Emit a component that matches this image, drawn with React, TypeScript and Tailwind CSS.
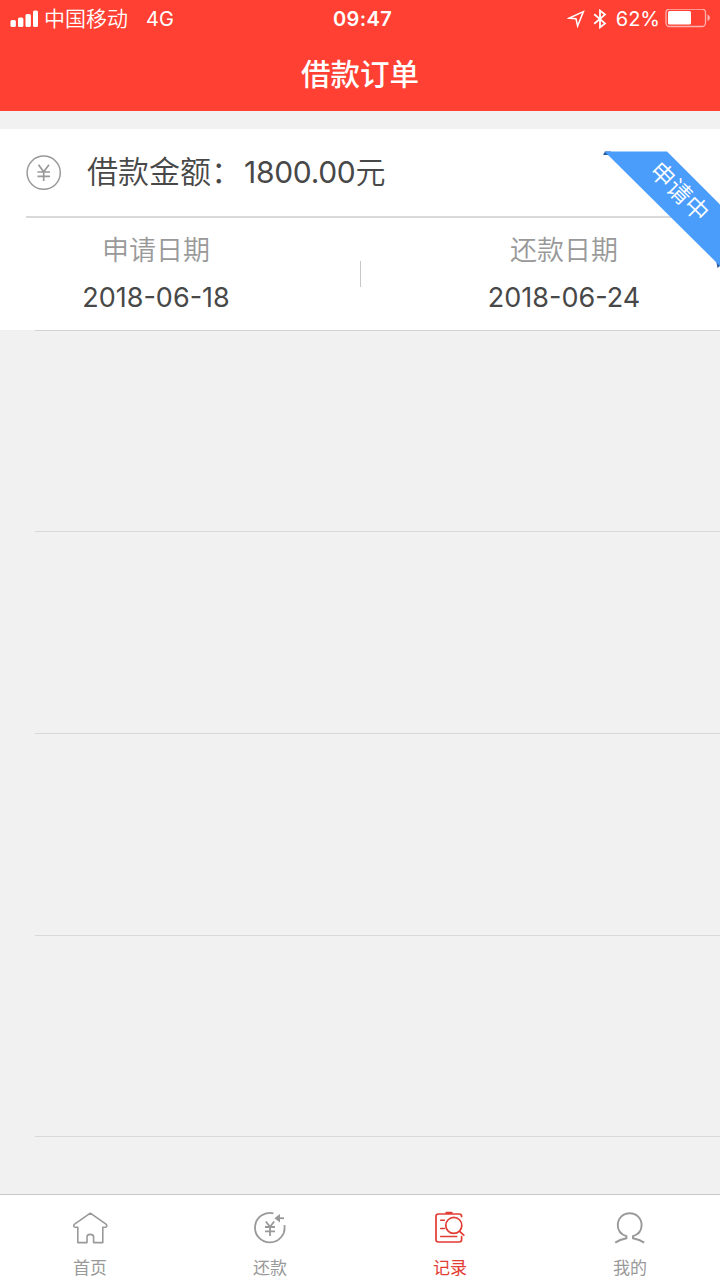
import type { ReactNode } from "react";
import clsx from "clsx";

const tabs = [
  { key: "home", label: "首页", icon: <HomeIcon /> },
  { key: "repay", label: "还款", icon: <RepayIcon /> },
  { key: "record", label: "记录", icon: <RecordIcon /> },
  { key: "mine", label: "我的", icon: <MineIcon /> },
];

const orders = [
  { id: 1, amount: "1800.00", applyDate: "2018-06-18", repayDate: "2018-06-24", status: "申请中" },
];

function HomeIcon() {
  return (
    <svg className="h-9 w-9" viewBox="0 0 36 36" fill="none" stroke="currentColor" strokeWidth="1.6" strokeLinejoin="round" strokeLinecap="round">
      <path d="M18.3 3.2 2.6 14.2Q1.4 15.2 2 16.6Q2.6 17.6 4.2 17.2H5.8V32.6H15V26.8Q15.2 24.4 18.3 24.4T21.6 26.8V32.6H30.8V17.2H32.4Q34 17.6 34.6 16.6Q35.2 15.2 34 14.2Z" />
    </svg>
  );
}

function RepayIcon() {
  return (
    <svg className="h-9 w-9" viewBox="0 0 36 36" fill="none" stroke="currentColor" strokeWidth="1.8">
      <path d="M21.4 3.3A14.8 14.8 0 1 0 32.4 15.2" />
      <path d="M32 8.2H24" />
      <path d="M28 4 22.4 8.2 28 12.4" fill="currentColor" stroke="none" />
      <path d="M13.8 11.5 18 16.8 22.2 11.5M18 16.8V26M13 17H23M13 21.4H23" />
    </svg>
  );
}

function RecordIcon() {
  return (
    <svg className="h-9 w-9" viewBox="0 0 36 36" fill="none" stroke="currentColor" strokeWidth="1.7" strokeLinecap="round">
      <path d="M29.6 6.6V6.4Q29.6 4 27.2 4H6.4Q4 4 4 6.4V29.6Q4 32 6.4 32H27.2Q29.6 32 29.6 29.6V26.6" />
      <path d="M14.4 2.8H19.6" strokeWidth="2.2" />
      <path d="M8.6 10.2H12.4M8.6 18.4H12.4M8.6 26.6H24.8" strokeWidth="1.5" />
      <circle cx="21.8" cy="15.4" r="8" />
      <path d="M27.6 21.4 31.8 25.2" />
    </svg>
  );
}

function MineIcon() {
  return (
    <svg className="h-9 w-9" viewBox="0 0 36 36" fill="none" stroke="currentColor" strokeWidth="1.9">
      <path d="M3.2 32.6C6.6 30.2 10 29 14.4 28.2V26.2C9 24.4 5.8 20.2 5.8 15.2C5.8 8.4 11 3.2 17.7 3.2S29.6 8.4 29.6 15.2C29.6 20.2 26.4 24.4 21 26.2V28.2C25.4 29 28.8 30.2 32.2 32.6" />
    </svg>
  );
}

function StatusBar() {
  return (
    <div className="flex h-9 items-center pt-px text-[20px] leading-9">
      <div className="flex w-60 items-center pl-2.5">
        <svg className="h-[18px] w-7" viewBox="0 0 28 18" fill="currentColor">
          <rect x="0.5" y="10" width="5.4" height="7" rx="1.5" />
          <rect x="8" y="7.5" width="5.4" height="9.5" rx="1.5" />
          <rect x="15.5" y="4" width="5.4" height="13" rx="1.5" />
          <rect x="23" y="0.5" width="5" height="16.5" rx="1.5" />
        </svg>
        <span className="ml-1.5 text-[21px] font-[350]">中国移动</span>
        <span className="ml-[18px]">4G</span>
      </div>
      <div className="flex-1 pl-[5px] text-center font-semibold tracking-[0.4px]">09:47</div>
      <div className="flex w-60 items-center justify-end pr-[9px]">
        <svg className="h-[18px] w-[18px]" viewBox="0 0 18 18" fill="none" stroke="currentColor" strokeWidth="1.5" strokeLinejoin="miter">
          <path d="M16.4 1.6 1.8 8.2 9 8.8 10.6 16Z" />
        </svg>
        <svg className="ml-2 h-5 w-3.5" viewBox="0 0 14 20" fill="none" stroke="currentColor" strokeWidth="1.8">
          <path d="M1.2 5.2 12 14.4 7 18.4V1.6L12 5.6 1.2 14.8" />
        </svg>
        <span className="ml-[9px]">62%</span>
        <svg className="ml-[5px] h-5 w-[46px]" viewBox="0 0 46 20" fill="none">
          <rect x="1" y="0" width="39.5" height="17.5" rx="3.5" stroke="currentColor" strokeOpacity="0.6" strokeWidth="1.3" />
          <rect x="3" y="2" width="23" height="13.5" rx="1.5" fill="currentColor" />
          <path d="M42.5 5.5Q45 6.5 45 8.8T42.5 12Z" fill="currentColor" fillOpacity="0.6" />
        </svg>
      </div>
    </div>
  );
}

function DateColumn({ label, value, className }: { label: string; value: string; className?: string }) {
  return (
    <div className={clsx("flex flex-col items-center", className)}>
      <span className="pt-px text-[27px] leading-[48px] font-[350] text-[#999]">{label}</span>
      <span className="-mt-px text-[27px] leading-[48px] text-[#484848]">{value}</span>
    </div>
  );
}

function Ribbon({ children }: { children: ReactNode }) {
  return (
    <div className="absolute top-[22px] right-0 h-[117px] w-[117px] overflow-hidden">
      <svg className="absolute inset-0 h-full w-full" viewBox="0 0 117 117">
        <path d="M0 4 2 .5H8V4ZM113 109H117V115L114.5 117Z" fill="#2a5c9e" />
        <path d="M1.5.5H64L117 53.5V115Z" fill="#4b9dfc" />
      </svg>
      <span className="absolute top-[25px] left-[36px] w-20 rotate-45 text-center text-[24px] leading-8 font-[350] whitespace-nowrap text-white">
        {children}
      </span>
    </div>
  );
}

export default function App() {
  const activeTab = "record";

  return (
    <div className="flex h-[1280px] w-[720px] flex-col overflow-hidden bg-[#f1f1f1] font-[Inter,'Noto_Sans_CJK_SC',sans-serif]">
      <header className="h-[111px] bg-[#ff4033] text-white">
        <StatusBar />
        <h1 className="text-center text-[29.5px] leading-[76px] font-medium">借款订单</h1>
      </header>

      <main className="flex-1 pt-[18px]">
        {orders.map((order) => (
          <section key={order.id} className="relative h-[201px] bg-white">
            <div className="ml-[26px] flex h-[89px] items-center border-b-2 border-[#d9d9d9]">
              <svg className="h-9 w-9" viewBox="0 0 36 36" fill="none" stroke="#999" strokeWidth="1.5">
                <circle cx="17.7" cy="17.7" r="16.6" />
                <path d="M12.5 9.7 17.7 16.8 23 9.7M17.7 16.8V26M11.5 17H24M11.5 21.3H24" strokeWidth="1.7" />
              </svg>
              <div className="ml-[25px] flex items-center text-[31px] font-[350] text-[#484848]">
                <span className="w-[157px] whitespace-nowrap">借款金额：</span>
                <span className="text-[30px] font-normal tracking-[-0.3px]">{order.amount}</span>
                <span className="text-[30px]">元</span>
              </div>
            </div>
            <div className="flex pt-2">
              <DateColumn label="申请日期" value={order.applyDate} className="w-[312px]" />
              <div className="mt-[35px] ml-12 h-[26px] w-px bg-[#c8c8c8]" />
              <DateColumn label="还款日期" value={order.repayDate} className="ml-[47px] w-[312px]" />
            </div>
            <Ribbon>{order.status}</Ribbon>
          </section>
        ))}

        {/* empty rows */}
        <div className="ml-[35px] border-t border-[#d4d4d4]">
          <div className="h-[201px] border-b border-[#d9d9d9]" />
          <div className="h-[202px] border-b border-[#d9d9d9]" />
          <div className="h-[202px] border-b border-[#d9d9d9]" />
          <div className="h-[201px] border-b border-[#d9d9d9]" />
        </div>
      </main>

      <nav className="grid h-[86px] grid-cols-4 border-t border-[#c8c8c8] bg-white">
        {tabs.map((tab) => (
          <div
            key={tab.key}
            className={clsx("flex flex-col items-center pt-[15px]", tab.key === activeTab ? "text-[#e23c34]" : "text-[#999]")}
          >
            {tab.icon}
            <span className="mt-2.5 text-[17px] leading-6">{tab.label}</span>
          </div>
        ))}
      </nav>
    </div>
  );
}
